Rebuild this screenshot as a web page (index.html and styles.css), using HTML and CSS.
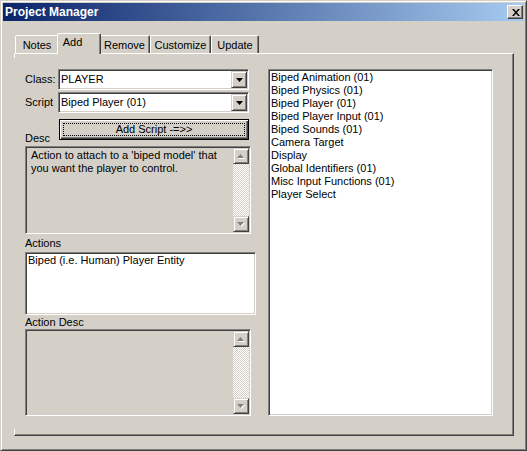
FILE: index.html
```html
<!DOCTYPE html>
<html>
<head>
<meta charset="utf-8">
<title>Project Manager</title>
<link rel="stylesheet" href="styles.css">
</head>
<body>
<div class="window">
  <div class="titlebar">
    <span class="title">Project Manager</span>
    <div class="close">
      <svg width="8" height="7" viewBox="0 0 8 7"><path d="M0 0h2l2 2.5L6 0h2L5 3.5 8 7H6L4 4.5 2 7H0l3-3.5z" fill="#000"/></svg>
    </div>
  </div>
  <div class="content">
    <div class="tabs">
      <div class="tab tab-notes">Notes</div>
      <div class="tab tab-add selected">Add</div>
      <div class="tab tab-remove">Remove</div>
      <div class="tab tab-customize">Customize</div>
      <div class="tab tab-update">Update</div>
    </div>
    <div class="panel">
      <div class="left">
        <div class="row">
          <span class="lbl">Class:</span>
          <div class="combo"><span class="combo-text">PLAYER</span><span class="drop"><svg width="7" height="4" viewBox="0 0 7 4"><path d="M0 0h7L3.5 4z" fill="#000"/></svg></span></div>
        </div>
        <div class="row">
          <span class="lbl">Script</span>
          <div class="combo"><span class="combo-text">Biped Player (01)</span><span class="drop"><svg width="7" height="4" viewBox="0 0 7 4"><path d="M0 0h7L3.5 4z" fill="#000"/></svg></span></div>
        </div>
        <div class="btn-row">
          <span class="lbl desc-lbl">Desc</span>
          <div class="defbtn"><span class="focus">Add Script -=&gt;&gt;</span></div>
        </div>
        <div class="memo desc">
          <div class="memo-text">Action to attach to a 'biped model' that you want the player to control.</div>
          <div class="vscroll">
            <span class="sbtn"><svg width="8" height="5" viewBox="0 0 8 5"><path d="M1 5h7L4.5 1z" fill="#fff"/><path d="M0 4h7L3.5 0z" fill="#808080"/></svg></span>
            <span class="track"></span>
            <span class="sbtn"><svg width="8" height="5" viewBox="0 0 8 5"><path d="M1 1h7L4.5 5z" fill="#fff"/><path d="M0 0h7L3.5 4z" fill="#808080"/></svg></span>
          </div>
        </div>
        <span class="lbl section-lbl">Actions</span>
        <div class="actions">
          <div class="item">Biped (i.e. Human) Player Entity</div>
        </div>
        <span class="lbl section-lbl2">Action Desc</span>
        <div class="memo adesc">
          <div class="memo-text"></div>
          <div class="vscroll">
            <span class="sbtn"><svg width="8" height="5" viewBox="0 0 8 5"><path d="M1 5h7L4.5 1z" fill="#fff"/><path d="M0 4h7L3.5 0z" fill="#808080"/></svg></span>
            <span class="track"></span>
            <span class="sbtn"><svg width="8" height="5" viewBox="0 0 8 5"><path d="M1 1h7L4.5 5z" fill="#fff"/><path d="M0 0h7L3.5 4z" fill="#808080"/></svg></span>
          </div>
        </div>
      </div>
      <div class="scripts">
        <div class="item">Biped Animation (01)</div>
        <div class="item">Biped Physics (01)</div>
        <div class="item">Biped Player (01)</div>
        <div class="item">Biped Player Input (01)</div>
        <div class="item">Biped Sounds (01)</div>
        <div class="item">Camera Target</div>
        <div class="item">Display</div>
        <div class="item">Global Identifiers (01)</div>
        <div class="item">Misc Input Functions (01)</div>
        <div class="item">Player Select</div>
      </div>
    </div>
  </div>
</div>
</body>
</html>
```
FILE: styles.css
```css
* { box-sizing: border-box; }

body {
  margin: 0;
  background: #d4d0c8;
  font-family: "Liberation Sans", Arial, sans-serif;
  font-size: 11px;
  color: #000;
}

.window {
  width: 527px;
  height: 451px;
  display: flex;
  flex-direction: column;
  padding: 2px;
  border: 1px solid;
  border-color: #d4d0c8 #404040 #404040 #d4d0c8;
  box-shadow: inset 1px 1px #fff, inset -1px -1px #808080;
  background: #d4d0c8;
}

.titlebar {
  height: 18px;
  flex: none;
  display: flex;
  align-items: center;
  justify-content: space-between;
  padding: 0 1px 0 2px;
  background: linear-gradient(to right, #0a246a, #a6caf0);
}

.title {
  color: #fff;
  font-weight: bold;
  font-size: 12px;
  line-height: 14px;
}

.close {
  width: 16px;
  height: 14px;
  display: flex;
  align-items: center;
  justify-content: center;
  background: #d4d0c8;
  border: 1px solid;
  border-color: #fff #404040 #404040 #fff;
  box-shadow: inset -1px -1px #808080;
  padding-left: 1px;
}
.close svg { display: block; }

.content {
  flex: 1;
  display: flex;
  flex-direction: column;
  padding: 12px 10px 12px 11px;
}

.tabs {
  display: flex;
  align-items: flex-end;
  height: 20px;
  margin-left: 1px;
  position: relative;
  z-index: 1;
}

.tab {
  height: 18px;
  padding-top: 3px;
  line-height: 13px;
  text-align: center;
  background: #d4d0c8;
  border: 1px solid;
  border-bottom: none;
  border-color: #fff #404040 transparent #fff;
  box-shadow: inset -1px 0 #808080;
  border-radius: 2px 2px 0 0;
}
.tab-notes { width: 44px; }
.tab-add { width: 44px; }
.tab-remove { width: 51px; }
.tab-customize { width: 61px; }
.tab-update { width: 48px; }

.tab.selected {
  height: 21px;
  margin: 0 -2px -1px;
  padding-top: 2px;
  padding-right: 13px;
  position: relative;
  z-index: 1;
}

.panel {
  flex: 1;
  display: flex;
  gap: 12px;
  padding: 15px 20px 0 10px;
  border-top: 1px solid #fff;
  border-left: 1px solid transparent;
  border-right: 1px solid #404040;
  border-bottom: 1px solid #404040;
  box-shadow: inset -1px -1px #808080;
  position: relative;
}
.panel::before,
.panel::after {
  content: "";
  position: absolute;
  left: -1px;
  width: 1px;
  background: #fff;
}
.panel::before { top: 0; height: 4px; }
.panel::after { bottom: 0; height: 6px; }

.left {
  width: 231px;
  display: flex;
  flex-direction: column;
  align-items: flex-start;
}

.lbl { line-height: 13px; white-space: nowrap; }

.row {
  display: grid;
  grid-template-columns: 33px 191px;
  align-items: center;
}
.row + .row { margin-top: 2px; }

.combo {
  height: 21px;
  display: flex;
  align-items: center;
  padding: 1px;
  background: #fff;
  border: 1px solid;
  border-color: #808080 #fff #fff #808080;
  box-shadow: inset 1px 1px #404040, inset -1px -1px #d4d0c8;
}
.combo-text { flex: 1; line-height: 13px; padding-left: 1px; }
.drop {
  width: 16px;
  height: 17px;
  display: flex;
  align-items: center;
  justify-content: center;
  background: #d4d0c8;
  border: 1px solid;
  border-color: #d4d0c8 #404040 #404040 #d4d0c8;
  box-shadow: inset 1px 1px #fff, inset -1px -1px #808080;
}
.drop svg { display: block; }

.btn-row {
  display: grid;
  grid-template-columns: 34px 190px;
  height: 26px;
  margin-top: 6px;
}
.desc-lbl { align-self: end; }

.defbtn {
  height: 21px;
  position: relative;
  background: #d4d0c8;
  border: 1px solid #000;
  box-shadow: inset 1px 1px #fff, inset -1px -1px #404040, inset -2px -2px #808080;
  display: flex;
  align-items: center;
  justify-content: center;
  line-height: 13px;
}
.focus {
  position: absolute;
  inset: 3px;
  border: 1px dotted #000;
  display: flex;
  align-items: center;
  justify-content: center;
  padding-bottom: 1px;
}

.memo {
  width: 226px;
  display: flex;
  padding: 1px;
  background: #d4d0c8;
  border: 1px solid;
  border-color: #808080 #fff #fff #808080;
  box-shadow: inset 1px 1px #404040, inset -1px -1px #d4d0c8;
}
.desc { height: 88px; margin-top: 1px; }
.adesc { height: 87px; margin-top: 0; }

.memo-text {
  flex: 1;
  padding: 1px 4px 0 4px;
  line-height: 13px;
}

.vscroll {
  width: 16px;
  display: flex;
  flex-direction: column;
}
.sbtn {
  height: 16px;
  flex: none;
  display: flex;
  align-items: center;
  justify-content: center;
  background: #d4d0c8;
  border: 1px solid;
  border-color: #d4d0c8 #404040 #404040 #d4d0c8;
  box-shadow: inset 1px 1px #fff, inset -1px -1px #808080;
}
.sbtn svg { display: block; }
.track {
  flex: 1;
  background: repeating-conic-gradient(#fff 0 25%, #d4d0c8 0 50%) 0 0 / 2px 2px;
}

.section-lbl { margin-top: 3px; }
.section-lbl2 { margin-top: 1px; }

.actions {
  width: 231px;
  height: 63px;
  margin-top: 2px;
  padding: 0 2px;
  background: #fff;
  border: 1px solid;
  border-color: #808080 #fff #fff #808080;
  box-shadow: inset 1px 1px #404040, inset -1px -1px #d4d0c8;
}

.item { line-height: 13px; white-space: nowrap; }
.actions .item { padding-top: 1px; }

.scripts {
  width: 225px;
  height: 347px;
  padding: 1px 2px;
  background: #fff;
  border: 1px solid;
  border-color: #808080 #fff #fff #808080;
  box-shadow: inset 1px 1px #404040, inset -1px -1px #d4d0c8;
}
```
